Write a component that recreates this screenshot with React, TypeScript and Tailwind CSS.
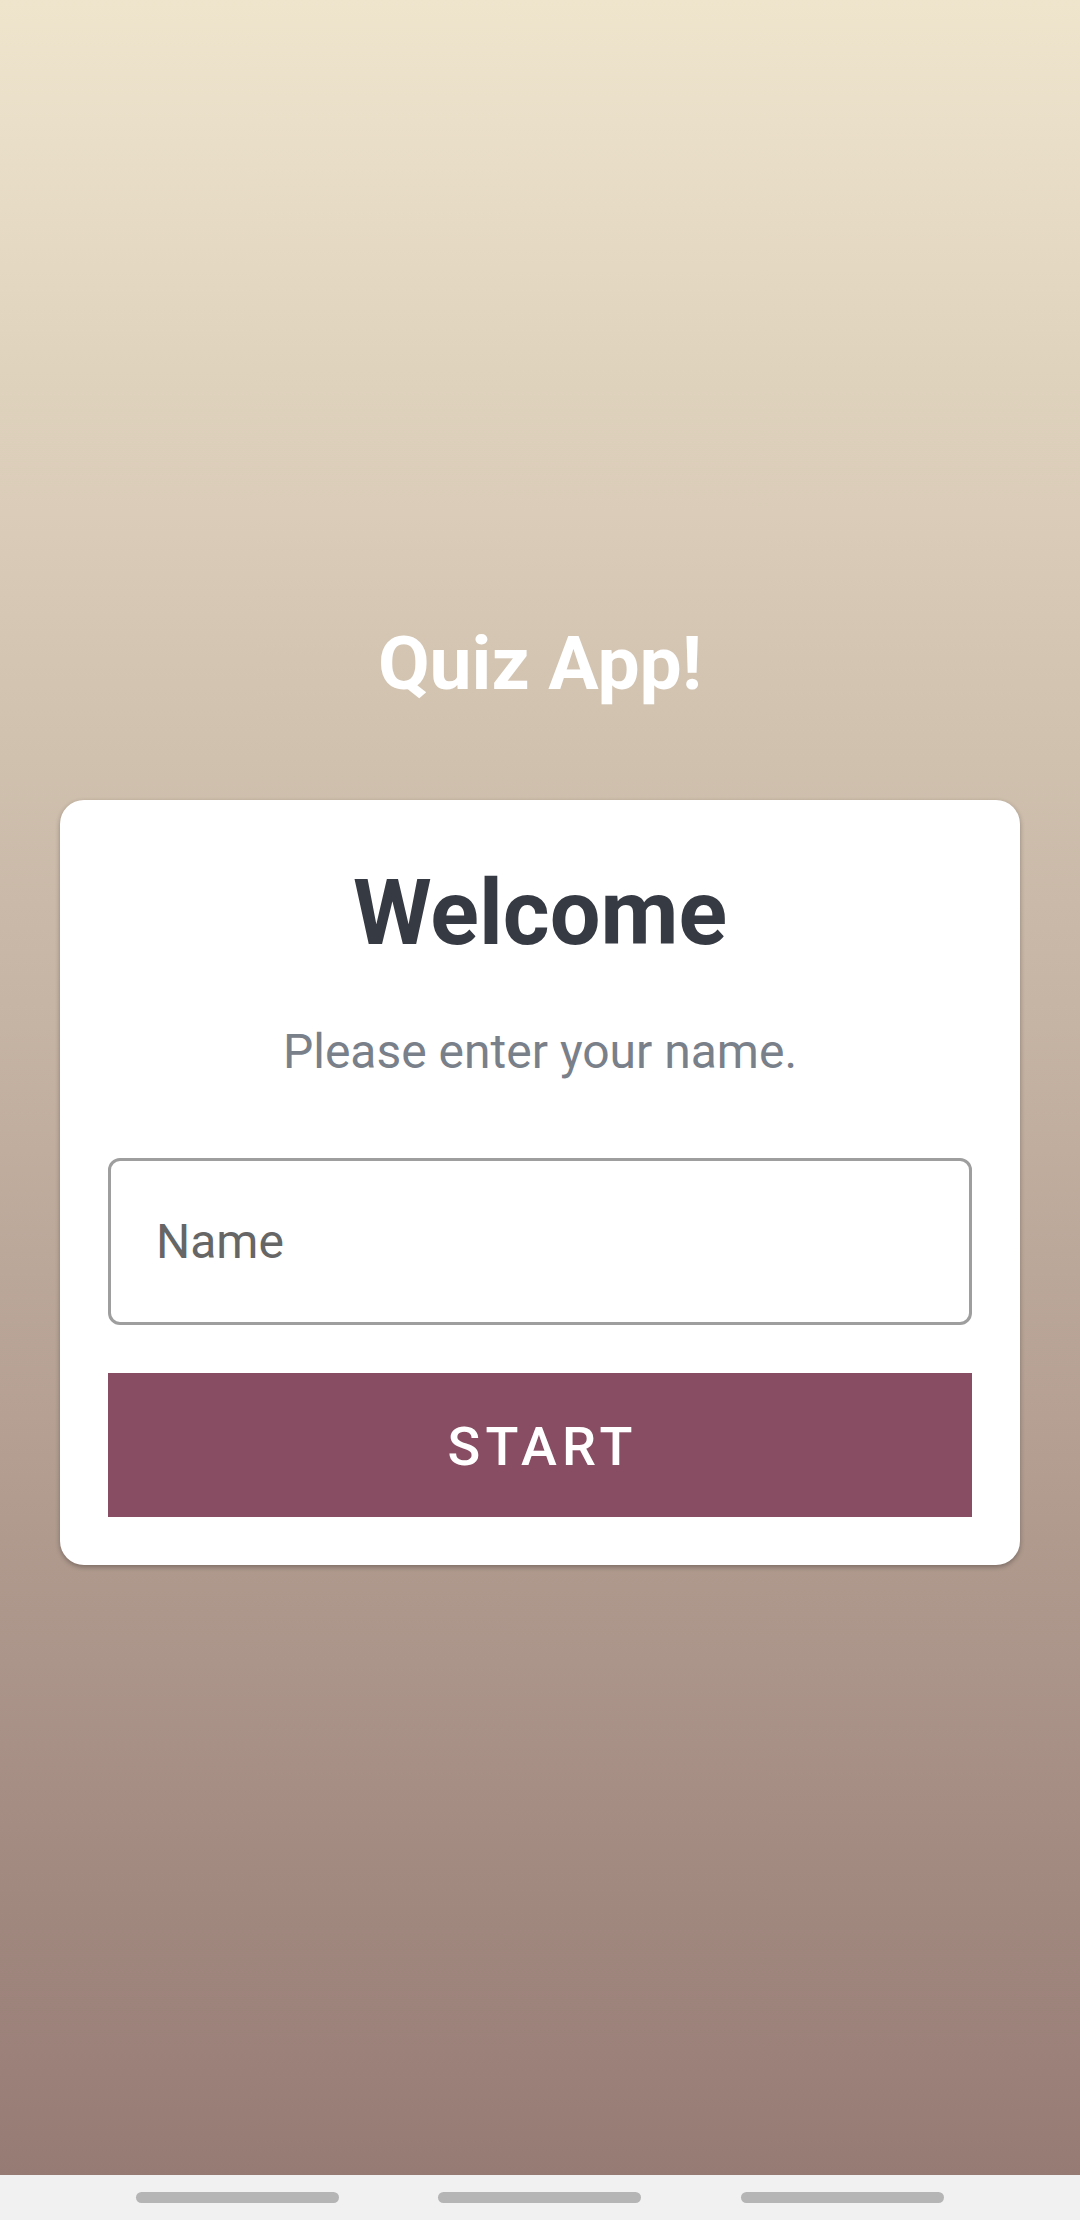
export default function App() {
  return (
    <div className="flex h-[2220px] w-[1080px] flex-col overflow-hidden font-['Roboto',sans-serif]">
      <main className="flex flex-1 flex-col bg-linear-to-b/srgb from-[#efe5cd] to-[#967b74] px-[60px] pt-[618px]">
        <h1 className="text-center text-[75px] leading-[90px] font-bold text-white">Quiz App!</h1>
        <section className="mt-[92px] flex h-[765px] flex-col rounded-[24px] bg-white px-12 pt-[61px] shadow-[0_2px_5px_rgba(0,0,0,0.3)]">
          <h2 className="text-center text-[90px] leading-[106px] font-bold text-[#363a43]">Welcome</h2>
          <p className="mt-[57px] text-center text-[48px] leading-[56px] text-[#7a8089]">Please enter your name.</p>
          <input
            type="text"
            placeholder="Name"
            className="mt-[78px] h-[167px] w-full rounded-[12px] border-[3px] border-[#9e9e9e] bg-white px-[45px] text-[48px] outline-none placeholder:text-[#666666]"
          />
          <button className="mt-12 h-36 w-full bg-[#884d62] pt-[3px] pl-[5px] text-center text-[54px] font-medium tracking-[5.2px] text-white">
            START
          </button>
        </section>
      </main>
      <nav className="flex h-[45px] shrink-0 gap-[99px] bg-[#f1f1f1] pt-[17px] pl-[136px]">
        <span className="h-[11px] w-[203px] rounded-full bg-[#b5b5b5]" />
        <span className="h-[11px] w-[203px] rounded-full bg-[#b5b5b5]" />
        <span className="ml-px h-[11px] w-[203px] rounded-full bg-[#b5b5b5]" />
      </nav>
    </div>
  );
}
